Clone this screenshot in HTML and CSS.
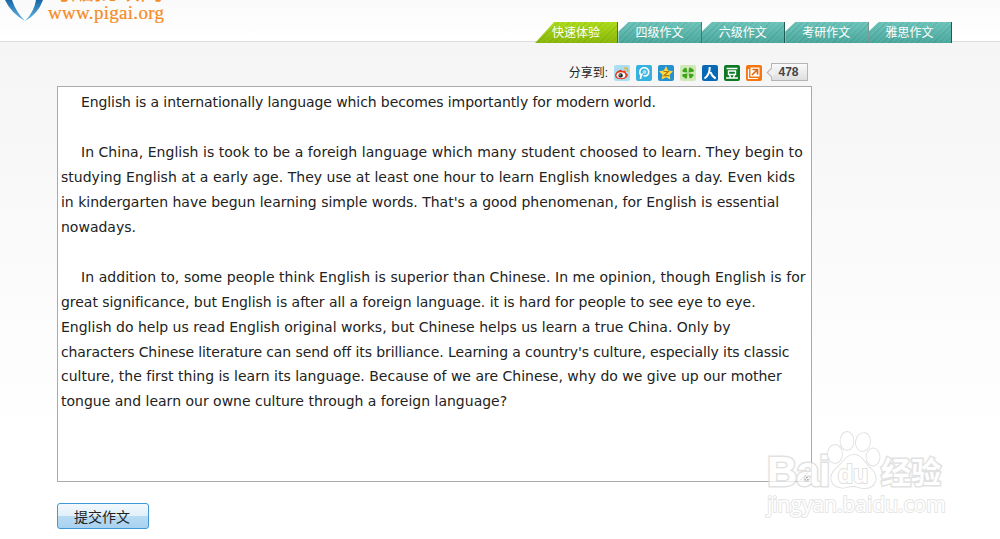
FILE: index.html
```html
<!DOCTYPE html>
<html lang="zh-CN">
<head>
    <meta charset="UTF-8">
    <title>批改网</title>
    <link rel="stylesheet" href="styles.css">
</head>
<body>
    <header class="header">
        <div class="logo">
            <svg class="logo-mark" width="50" height="24" viewBox="0 0 50 24">
                <defs>
                    <linearGradient id="logoBlue" x1="0" y1="0" x2="0" y2="1">
                        <stop offset="0" stop-color="#1767a5"/>
                        <stop offset="1" stop-color="#65b8e8"/>
                    </linearGradient>
                </defs>
                <path d="M5 0H12Q16 12 25 21Q11 13 5 0Z" fill="url(#logoBlue)"/>
                <path d="M43 0H36Q34 12 25 21Q38 14 43 0Z" fill="url(#logoBlue)"/>
            </svg>
            <div class="logo-text">
                <span class="logo-name">句酷批改网</span>
                <span class="logo-url">www.pigai.org</span>
            </div>
        </div>
        <nav class="tabs">
            <a class="tab active">快速体验</a>
            <a class="tab">四级作文</a>
            <a class="tab">六级作文</a>
            <a class="tab">考研作文</a>
            <a class="tab">雅思作文</a>
        </nav>
    </header>

    <main class="content">
        <div class="share">
            <span class="share-label">分享到:</span>
            <!-- weibo -->
            <svg width="16" height="16" viewBox="0 0 16 16">
                <rect width="16" height="16" rx="2" fill="#a9dff0"/>
                <path d="M1 10Q2 6 6 5Q8 4 8 6Q12 5 12 8Q15 9 13 12Q10 15 6 14Q1 14 1 10Z" fill="#e5391c"/>
                <ellipse cx="7" cy="10.3" rx="4.4" ry="3" fill="#fff"/>
                <circle cx="6.6" cy="10.4" r="2.2" fill="#222"/>
                <circle cx="6" cy="10" r=".7" fill="#fff"/>
                <path d="M10 3Q14 2 14 7M10 5Q12 5 12 7" fill="none" stroke="#f5a623" stroke-width="1.1"/>
            </svg>
            <!-- tencent weibo -->
            <svg width="16" height="16" viewBox="0 0 16 16">
                <rect width="16" height="16" rx="2" fill="#35b2de"/>
                <path d="M4.5 14Q4.500 11 6.500 8.500M5 10.500Q2.500 7 5 4Q8 1.500 11.500 4Q14 7 11.500 10Q9.500 11.500 7.500 10.500" fill="none" stroke="#fff" stroke-width="1.600"/>
                <circle cx="8.500" cy="7" r="2" fill="#a5e2f5"/>
            </svg>
            <!-- qzone -->
            <svg width="16" height="16" viewBox="0 0 16 16">
                <rect width="16" height="16" rx="2" fill="#2492d2"/>
                <path d="M8 1L10.100 5.500L15 6.200L11.500 9.700L12.400 14.600L8 12.300L3.600 14.600L4.500 9.700L1 6.200L5.900 5.500Z" fill="#ffd93b"/>
                <path d="M5.500 6.500H10.300L6 10.700H11" fill="none" stroke="#b87a10" stroke-width="1.200"/>
            </svg>
            <!-- clover -->
            <svg width="16" height="16" viewBox="0 0 16 16">
                <rect width="16" height="16" rx="2" fill="#cfe8b8"/>
                <g fill="#3fa51b">
                    <path d="M7.500 7.500L3 7Q1.500 5 3.500 4.500Q4 2 6.500 3Z"/>
                    <path d="M8.500 7.500L9 3Q11 1.500 11.800 3.700Q14.500 4 13.500 6.700Z"/>
                    <path d="M8.500 8.500L13 9Q14.500 11 12.500 11.500Q12 14 9.500 13Z"/>
                    <path d="M7.500 8.500L7 13Q5 14.500 4.200 12.300Q1.500 12 2.500 9.300Z"/>
                </g>
            </svg>
            <!-- renren -->
            <svg width="16" height="16" viewBox="0 0 16 16">
                <rect width="16" height="16" rx="2" fill="#0869b4"/>
                <path d="M7.700 2Q8 9.500 2.500 13.500M8.500 7Q10 11.500 13.700 13.500" fill="none" stroke="#fff" stroke-width="2"/>
            </svg>
            <!-- douban -->
            <svg width="16" height="16" viewBox="0 0 16 16">
                <rect width="16" height="16" rx="2" fill="#0b7a23"/>
                <path d="M2.500 3.500H13.500M4.500 6H11.500V9.500H4.500ZM5.500 10L6.500 12.500M10.500 10L9.500 12.500M2 13H14" fill="none" stroke="#fff" stroke-width="1.400"/>
            </svg>
            <!-- more -->
            <svg width="16" height="16" viewBox="0 0 16 16">
                <rect width="16" height="16" rx="2" fill="#f5760f"/>
                <rect x="4.500" y="2.500" width="9" height="9" fill="#fff"/>
                <path d="M2.500 4V13.500H12" fill="none" stroke="#fff" stroke-width="1.200"/>
                <path d="M6.500 4.500H11.500V9.500M11 5L6 10" fill="none" stroke="#e0660c" stroke-width="1.700"/>
            </svg>
            <span class="share-count">478</span>
        </div>

        <div class="essay">
            <p>
                <span class="line first tight">English is a internationally language which becomes importantly for modern world.</span>
            </p>
            <p>
                <span class="line first loose">In China, English is took to be a foreigh language which many student choosed to learn. They begin to</span>
                <span class="line slightly-loose">studying English at a early age. They use at least one hour to learn English knowledges a day. Even kids</span>
                <span class="line slightly-tight">in kindergarten have begun learning simple words. That's a good phenomenan, for English is essential</span>
                <span class="line">nowadays.</span>
            </p>
            <p>
                <span class="line first looser">In addition to, some people think English is superior than Chinese. In me opinion, though English is for</span>
                <span class="line semi-tight">great significance, but English is after all a foreign language. it is hard for people to see eye to eye.</span>
                <span class="line">English do help us read English original works, but Chinese helps us learn a true China. Only by</span>
                <span class="line tight">characters Chinese literature can send off its brilliance. Learning a country's culture, especially its classic</span>
                <span class="line">culture, the first thing is learn its language. Because of we are Chinese, why do we give up our mother</span>
                <span class="line">tongue and learn our owne culture through a foreign language?</span>
            </p>
            <svg class="grip" width="11" height="9" viewBox="0 0 11 9">
                <path d="M1 8.500L9.500 0M5 8.500L9.500 4M8 8.500L9.500 7" stroke="#555" stroke-dasharray="2 1"/>
            </svg>
        </div>

        <button class="submit">提交作文</button>
    </main>

    <div class="watermark">
        <div class="wm-top">
            <span class="wm-bai">Bai</span>
            <svg class="wm-paw" width="54" height="60" viewBox="0 0 54 60">
                <g fill="#fff" stroke="#d8d8d8" stroke-width="1.800">
                    <ellipse cx="8" cy="23" rx="7" ry="9"/>
                    <ellipse cx="20" cy="10" rx="6.500" ry="9"/>
                    <ellipse cx="36" cy="11" rx="7" ry="9" transform="rotate(12 36 11)"/>
                    <ellipse cx="46" cy="26" rx="6.500" ry="8.500"/>
                    <path d="M27 24C35 24 37 32 44 38C52 45 49 57 38 57C32 57 30 55 26 55C20 55 18 58 12 56C3 54 2 44 9 38C16 32 19 24 27 24Z"/>
                </g>
                <text x="26" y="52" text-anchor="middle" class="wm-du">du</text>
            </svg>
            <span class="wm-cn">经验</span>
        </div>
        <div class="wm-url">jingyan.baidu.com</div>
    </div>
</body>
</html>
```
FILE: styles.css
```css
* {
    box-sizing: border-box;
}
body {
    margin: 0;
    height: 539px;
    overflow: hidden;
    position: relative;
    font-family: "Liberation Sans", "Noto Sans CJK SC", sans-serif;
    color: #222;
    background: linear-gradient(#f5f5f5 42px, #fff 440px);
}
.header {
    display: flex;
    justify-content: space-between;
    height: 42px;
    padding-right: 48px;
    background: linear-gradient(#fafafa, #fff);
    border-bottom: 1px solid #ddd;
}
.logo {
    display: flex;
}
.logo-text {
    display: flex;
    flex-direction: column;
    margin-top: -21px;
    margin-left: -2px;
    color: #f68b1f;
}
.logo-name {
    height: 24px;
    font-size: 23px;
    line-height: 24px;
}
.logo-url {
    font-family: "Liberation Serif", serif;
    font-size: 19px;
    line-height: 20px;
    letter-spacing: 0.3px;
    -webkit-text-stroke: 0.2px #f68b1f;
}
.tabs {
    display: flex;
    margin-top: 22px;
    height: 21px;
}
.tab {
    width: 83.400px;
    height: 21px;
    padding-left: 17px;
    font-size: 12px;
    line-height: 23px;
    color: #fff;
    border-right: 1px solid #245a55;
    background: repeating-linear-gradient(135deg, rgba(0, 70, 60, 0.1) 0 1px, transparent 1px 4px), linear-gradient(#70c5bb, #4da99f);
    clip-path: polygon(0 100%, 0 45%, 10px 0, 100% 0, 100% 100%);
}
.tab.active {
    border-right-color: #4f7a08;
    background: repeating-linear-gradient(135deg, rgba(70, 100, 0, 0.12) 0 1px, transparent 1px 4px), linear-gradient(#addd1c, #8bb80c);
    clip-path: polygon(0 100%, 19px 0, 100% 0, 100% 100%);
}
.content {
    padding: 20px 0 0 57px;
}
.share {
    display: flex;
    align-items: center;
    justify-content: flex-end;
    gap: 6px;
    width: 751px;
    height: 21px;
}
.share-label {
    margin-top: -2px;
    font-size: 12px;
}
.share-count {
    position: relative;
    width: 37px;
    height: 18px;
    margin-left: 3px;
    margin-top: -1px;
    padding-right: 2px;
    border: 1px solid #b5b5b5;
    background: linear-gradient(#fafafa, #dedede);
    font-size: 12px;
    font-weight: bold;
    line-height: 16px;
    text-align: center;
    color: #444;
}
.share-count::before {
    content: "";
    position: absolute;
    left: -4px;
    top: 5px;
    width: 6px;
    height: 6px;
    border: 1px solid #b5b5b5;
    border-width: 0 0 1px 1px;
    background: #f0f0f0;
    transform: rotate(45deg);
}
.essay {
    position: relative;
    width: 755px;
    height: 396px;
    margin-top: 3px;
    padding: 3px;
    border: 1px solid #aaa;
    background: #fff;
    font-family: "DejaVu Sans", sans-serif;
    font-size: 14px;
    line-height: 24.960px;
    font-variant-ligatures: none;
    white-space: nowrap;
}
.essay p {
    margin: 0 0 24.960px;
}
.line {
    display: block;
}
.first {
    padding-left: 20px;
}
.tight {
    letter-spacing: -0.100px;
}
.semi-tight {
    letter-spacing: -0.035px;
}
.slightly-tight {
    letter-spacing: -0.015px;
}
.slightly-loose {
    letter-spacing: 0.020px;
}
.loose {
    letter-spacing: 0.035px;
}
.looser {
    letter-spacing: 0.060px;
}
.grip {
    position: absolute;
    right: 1px;
    bottom: 0;
}
.submit {
    display: block;
    width: 92px;
    height: 26px;
    margin-top: 21px;
    padding: 0 2px 0 0;
    border: 1px solid #3c9bd6;
    border-radius: 3px;
    background: linear-gradient(#f3f9fd, #e0eff9 50%, #b9dbf3 50%, #a8d2f1);
    font-family: "Noto Sans CJK SC", sans-serif;
    font-size: 14px;
    line-height: 24px;
    color: #222;
}
.watermark {
    position: absolute;
    left: 767px;
    top: 431px;
    color: #fff;
    opacity: 0.75;
    -webkit-text-stroke: 3px #d8d8d8;
    paint-order: stroke fill;
}
.wm-top {
    display: flex;
    align-items: flex-end;
    height: 60px;
}
.wm-bai {
    width: 60px;
    font-size: 42px;
    font-weight: bold;
    line-height: 38px;
    letter-spacing: -1px;
}
.wm-paw {
    flex: none;
}
.wm-du {
    font-size: 25px;
    font-weight: bold;
    fill: #fff;
    stroke: #d8d8d8;
    stroke-width: 2px;
}
.wm-cn {
    font-size: 30px;
    font-weight: bold;
    line-height: 36px;
}
.wm-url {
    font-family: "Open Sans", sans-serif;
    font-size: 21px;
    line-height: 26px;
    -webkit-text-stroke: 2px #dedede;
}
```
